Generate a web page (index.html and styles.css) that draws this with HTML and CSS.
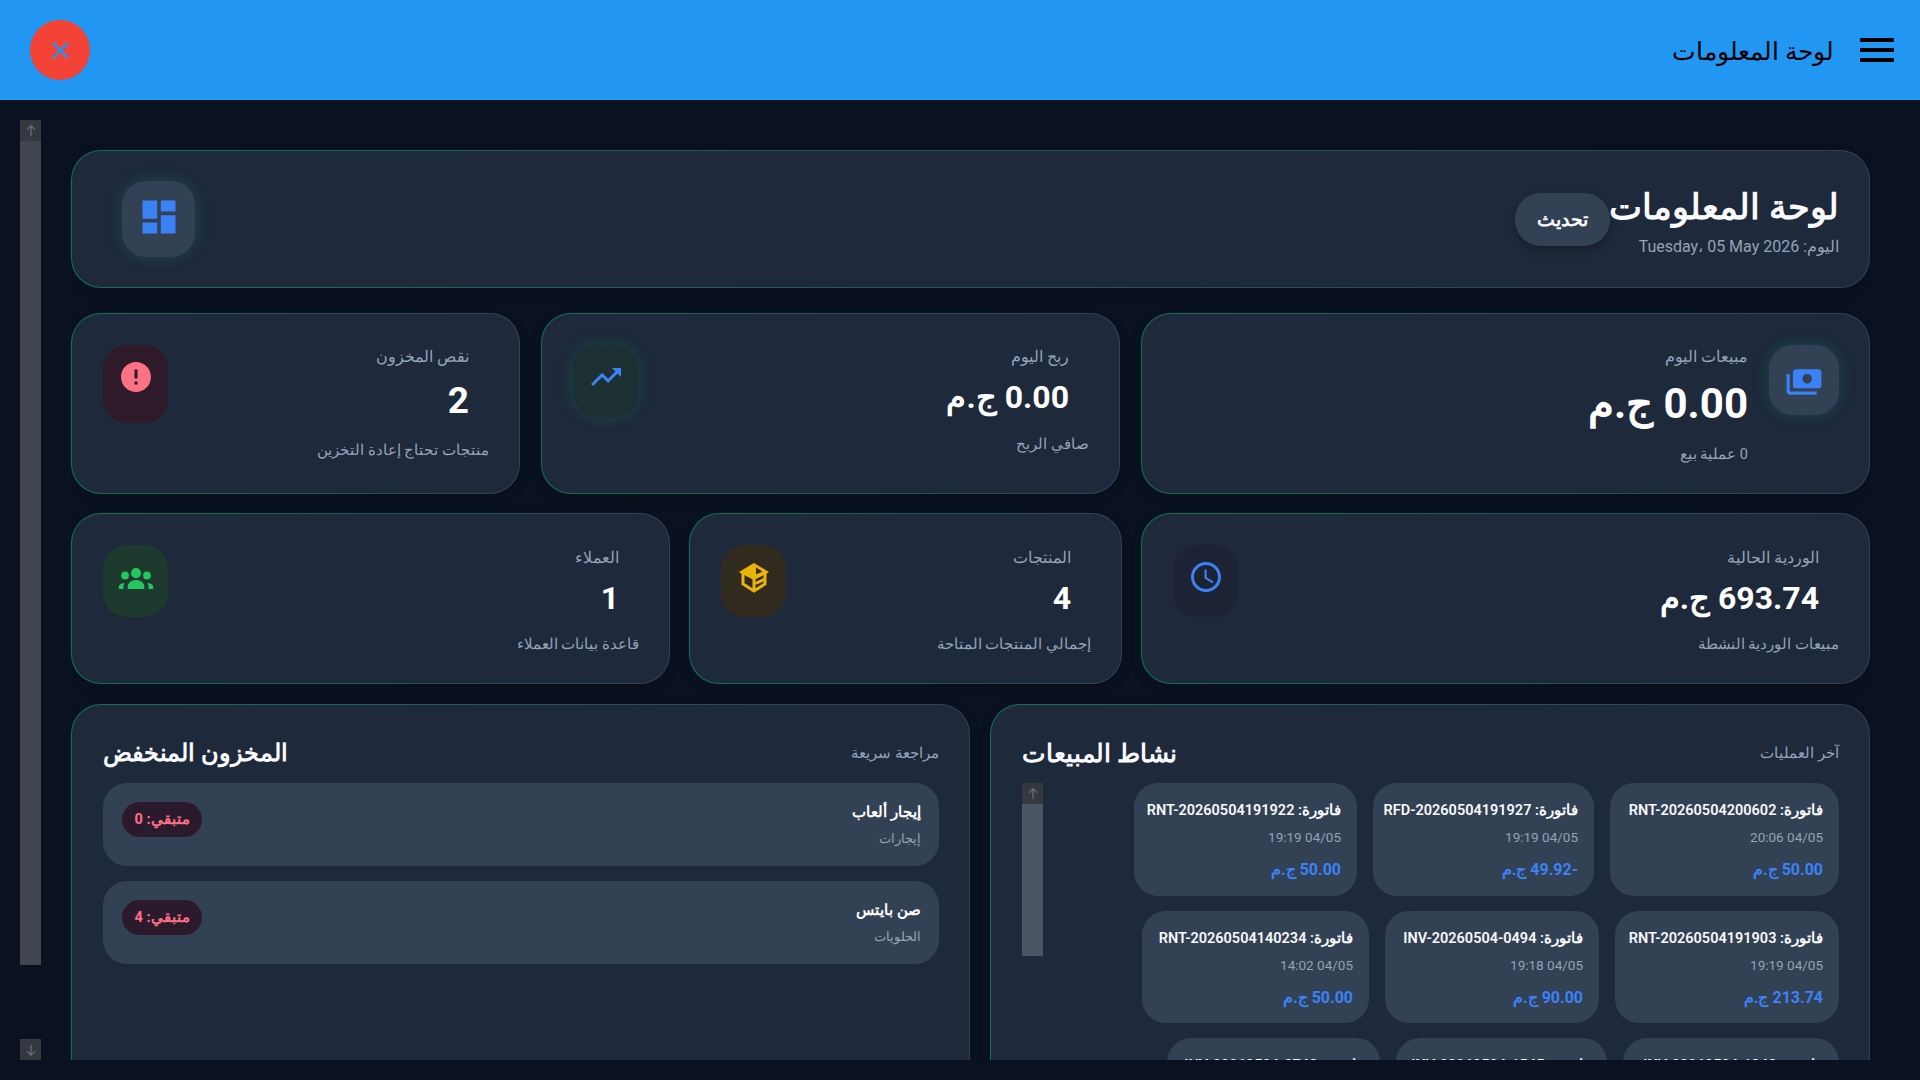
FILE: index.html
```html
<!DOCTYPE html>
<html lang="ar" dir="rtl">
<head>
<meta charset="utf-8">
<title>لوحة المعلومات</title>
<link rel="stylesheet" href="styles.css">
</head>
<body>
<header class="topbar">
  <button class="menu-btn" aria-label="menu"><span></span><span></span><span></span></button>
  <div class="topbar-title">لوحة المعلومات</div>
  <div class="topbar-spacer"></div>
  <button class="close-btn" aria-label="close">
    <svg viewBox="0 0 24 24" width="29" height="29"><path d="M19 6.41 17.59 5 12 10.59 6.41 5 5 6.41 10.59 12 5 17.59 6.41 19 12 13.41 17.59 19 19 17.59 13.41 12z" fill="#2196f3"/></svg>
  </button>
</header>
<div class="viewport">
  <main class="content">
    <section class="card hero">
      <div class="hero-text">
        <h1>لوحة المعلومات</h1>
        <p>اليوم: Tuesday، 05 May 2026</p>
      </div>
      <button class="refresh">تحديث</button>
      <div class="hero-spacer"></div>
      <div class="icon-box hero-icon glow">
        <svg viewBox="0 0 24 24" width="44" height="44"><path d="M3 13h8V3H3zm0 8h8v-6H3zm10 0h8V11h-8zm0-18v6h8V3z" fill="#3b82f6"/></svg>
      </div>
    </section>

    <div class="row row-a">
      <article class="card stat stat-sales">
        <div class="stat-head">
          <div class="icon-box slate glow icon-70">
            <svg viewBox="0 0 24 24" width="38" height="38"><path d="M19 14V6c0-1.100-.9-2-2-2H3c-1.100 0-2 .9-2 2v8c0 1.100.9 2 2 2h14c1.100 0 2-.9 2-2zm-9-1c-1.660 0-3-1.340-3-3s1.340-3 3-3 3 1.340 3 3-1.340 3-3 3zm13-6v11c0 1.100-.9 2-2 2H4v-2h17V7h2z" fill="#3b82f6" transform="translate(24 0) scale(-1 1)"/></svg>
          </div>
          <div class="stat-body">
            <div class="stat-label">مبيعات اليوم</div>
            <div class="stat-value xl">0.00 ج.م</div>
            <div class="stat-sub">0 عملية بيع</div>
          </div>
        </div>
      </article>
      <article class="card stat stat-profit">
        <div class="stat-head">
          <div class="stat-main">
            <div class="stat-label">ربح اليوم</div>
            <div class="stat-value">0.00 ج.م</div>
          </div>
          <div class="icon-box green-dark glow">
            <svg viewBox="0 0 24 24" width="36" height="36"><path d="m16 6 2.290 2.290-4.880 4.880-4-4L2 16.590 3.410 18l6-6 4 4 6.300-6.290L22 12V6z" fill="#3b82f6"/></svg>
          </div>
        </div>
        <div class="stat-sub under">صافي الربح</div>
      </article>
      <article class="card stat stat-low">
        <div class="stat-head">
          <div class="stat-main">
            <div class="stat-label">نقص المخزون</div>
            <div class="stat-value lg">2</div>
          </div>
          <div class="icon-box rose tall">
            <svg viewBox="0 0 24 24" width="36" height="36"><path d="M12 2C6.480 2 2 6.480 2 12s4.480 10 10 10 10-4.480 10-10S17.520 2 12 2zm1 15h-2v-2h2zm0-4h-2V7h2z" fill="#fb7185"/></svg>
          </div>
        </div>
        <div class="stat-sub under">منتجات تحتاج إعادة التخزين</div>
      </article>
    </div>

    <div class="row row-b">
      <article class="card stat stat-shift">
        <div class="stat-head">
          <div class="stat-main">
            <div class="stat-label">الوردية الحالية</div>
            <div class="stat-value">693.74 ج.م</div>
          </div>
          <div class="icon-box navy">
            <svg viewBox="0 0 24 24" width="36" height="36"><path d="M11.990 2C6.470 2 2 6.480 2 12s4.470 10 9.990 10C17.520 22 22 17.520 22 12S17.520 2 11.990 2zM12 20c-4.420 0-8-3.580-8-8s3.580-8 8-8 8 3.580 8 8-3.580 8-8 8zm.5-13H11v6l5.250 3.150.75-1.230-4.500-2.670z" fill="#3b82f6"/></svg>
          </div>
        </div>
        <div class="stat-sub under">مبيعات الوردية النشطة</div>
      </article>
      <article class="card stat stat-products">
        <div class="stat-head">
          <div class="stat-main">
            <div class="stat-label">المنتجات</div>
            <div class="stat-value">4</div>
          </div>
          <div class="icon-box amber">
            <svg viewBox="0 0 30 30" width="30" height="30" class="box-icon">
              <path d="M15 0 0 9l3 2 12 6 12-6 3-2z" fill="#eab308"/>
              <path d="M17 4.500v7l6.500-3z" fill="#312a1e"/>
              <path d="M4 9v12l11 7 11-7V9M15 15v13M16.500 20.500 26 16" fill="none" stroke="#eab308" stroke-width="3"/>
            </svg>
          </div>
        </div>
        <div class="stat-sub under">إجمالي المنتجات المتاحة</div>
      </article>
      <article class="card stat stat-customers">
        <div class="stat-head">
          <div class="stat-main">
            <div class="stat-label">العملاء</div>
            <div class="stat-value">1</div>
          </div>
          <div class="icon-box green">
            <svg viewBox="0 0 24 24" width="36" height="36" fill="#22c55e">
              <circle cx="12" cy="9.400" r="3.400"/>
              <circle cx="4.700" cy="11" r="2.600"/>
              <circle cx="19.300" cy="11" r="2.600"/>
              <path d="M6.500 20v-1.500c0-2.600 2.400-4.500 5.500-4.500s5.500 1.900 5.500 4.500V20z"/>
              <path d="M.5 20v-1c0-1.500 1-2.700 3.800-3-.5 1-.7 2-.7 3v1z"/>
              <path d="M23.500 20v-1c0-1.500-1-2.700-3.800-3 .5 1 .7 2 .7 3v1z"/>
            </svg>
          </div>
        </div>
        <div class="stat-sub under">قاعدة بيانات العملاء</div>
      </article>
    </div>

    <div class="row row-c">
      <section class="card panel panel-sales">
        <div class="panel-head">
          <span class="panel-note">آخر العمليات</span>
          <h2>نشاط المبيعات</h2>
        </div>
        <div class="activity">
          <div class="activity-list">
            <div class="tx"><b>فاتورة: RNT-20260504200602</b><span>04/05 20:06</span><em>50.00 ج.م</em></div>
            <div class="tx"><b>فاتورة: RFD-20260504191927</b><span>04/05 19:19</span><em>-49.92 ج.م</em></div>
            <div class="tx"><b>فاتورة: RNT-20260504191922</b><span>04/05 19:19</span><em>50.00 ج.م</em></div>
            <div class="tx"><b>فاتورة: RNT-20260504191903</b><span>04/05 19:19</span><em>213.74 ج.م</em></div>
            <div class="tx"><b>فاتورة: INV-20260504-0494</b><span>04/05 19:18</span><em>90.00 ج.م</em></div>
            <div class="tx"><b>فاتورة: RNT-20260504140234</b><span>04/05 14:02</span><em>50.00 ج.م</em></div>
            <div class="tx"><b>فاتورة: INV-20260504-1943</b><span>04/05 13:00</span><em>50.00 ج.م</em></div>
            <div class="tx"><b>فاتورة: INV-20260504-1545</b><span>04/05 12:40</span><em>50.00 ج.م</em></div>
            <div class="tx"><b>فاتورة: INV-20260504-0743</b><span>04/05 12:10</span><em>50.00 ج.م</em></div>
          </div>
          <div class="scrollbar inner-bar">
            <div class="sb-btn"><svg viewBox="0 0 12 12" width="14" height="14"><path d="M6 1.500v9M2.500 5 6 1.500 9.500 5" fill="none" stroke="#6b7280" stroke-width="1"/></svg></div>
          </div>
        </div>
      </section>
      <section class="card panel panel-low">
        <div class="panel-head">
          <span class="panel-note">مراجعة سريعة</span>
          <h2>المخزون المنخفض</h2>
        </div>
        <div class="low-list">
          <div class="low-item">
            <div class="low-text"><b>إيجار ألعاب</b><span>إيجارات</span></div>
            <div class="badge">متبقي: 0</div>
          </div>
          <div class="low-item">
            <div class="low-text"><b>صن بايتس</b><span>الحلويات</span></div>
            <div class="badge">متبقي: 4</div>
          </div>
        </div>
      </section>
    </div>
  </main>
  <div class="page-scroll">
    <div class="scrollbar outer-bar">
      <div class="sb-btn"><svg viewBox="0 0 12 12" width="14" height="14"><path d="M6 1.500v9M2.500 5 6 1.500 9.500 5" fill="none" stroke="#6b7280" stroke-width="1"/></svg></div>
    </div>
    <div class="sb-btn sb-down"><svg viewBox="0 0 12 12" width="14" height="14"><path d="M6 1.500v9M2.500 7 6 10.500 9.500 7" fill="none" stroke="#6b7280" stroke-width="1"/></svg></div>
  </div>
</div>
</body>
</html>
```
FILE: styles.css
```css
* { box-sizing: border-box; }
html, body { margin: 0; height: 100%; overflow: hidden; }
body {
  background: #0a1120;
  color: #fff;
  font-family: Roboto, sans-serif;
  height: 1080px;
}
button { font-family: inherit; border: 0; padding: 0; cursor: pointer; }
h1, h2, p { margin: 0; }

.topbar {
  height: 100px;
  background: #2196f3;
  display: flex;
  align-items: center;
  padding: 0 26px 0 30px;
}
.menu-btn {
  width: 34px; height: 24px;
  background: none;
  display: flex; flex-direction: column; justify-content: space-between;
}
.menu-btn span { display: block; height: 4px; background: #000; }
.topbar-title { font-size: 25px; color: #000; margin-right: 26px; line-height: 1; padding-top: 2px; }
.topbar-spacer { flex: 1; }
.close-btn {
  width: 60px; height: 60px; border-radius: 50%;
  background: #f44336;
  display: flex; align-items: center; justify-content: center;
}

.viewport {
  height: 980px;
  padding: 20px;
  display: flex;
}
.content {
  width: 1799px;
  margin-right: 30px;
  padding-top: 30px;
  height: 940px;
  overflow: hidden;
  order: 1;
}
.page-scroll { order: 2; width: 21px; display: flex; flex-direction: column; justify-content: space-between; height: 940px; margin-right: 30px; }

.scrollbar { width: 21px; }
.outer-bar { height: 845px; background: #42454f; }
.sb-btn { width: 21px; height: 21px; background: #36383f; display: flex; align-items: center; justify-content: center; }

.card {
  border: 1px solid transparent;
  border-radius: 30px;
  background:
    linear-gradient(#1e293b, #1e293b) padding-box,
    linear-gradient(90deg, #0c7358 0%, #334155 100%) border-box;
  box-shadow: 0 4px 12px rgba(0,0,0,.15);
}
.hero {
  height: 138px;
  display: flex;
  align-items: center;
  padding: 0 30px 0 50px;
}
.hero-text { display: flex; flex-direction: column; }
.hero h1 { font-size: 35px; font-weight: 600; line-height: 53px; color: #f8fafc; }
.hero p { font-size: 16px; color: #94a3b8; line-height: 22px; margin-top: 2px; }
.refresh {
  width: 95px; height: 53px;
  border-radius: 26px;
  background: #334155;
  color: #f8fafc;
  font-size: 19px;
  font-weight: 600;
  box-shadow: 0 4px 10px rgba(0,0,0,.25);
  margin-right: -1px;
}
.hero-spacer { flex: 1; }
.icon-box {
  width: 65px; height: 72px;
  margin-top: 1px;
  border-radius: 24px;
  padding-top: 14px;
  display: flex; align-items: flex-start; justify-content: center;
  flex: none;
}
.hero-icon { width: 73px; height: 76px; background: #334155; margin-top: 0; }
.glow { box-shadow: 0 0 16px rgba(16,185,129,.22); }
.slate { background: #334155; }
.icon-70 { width: 70px; height: 70px; padding-top: 18px; }
.green-dark { background: #1c2f33; }
.rose { background: #2e1a28; }
.tall { height: 78px; }
.navy { background: #1e2235; }
.amber { background: #312a1e; }
.green { background: #1e3a2f; }
.box-icon { margin-top: 4px; }

.row { display: grid; }
.row-a { grid-template-columns: 729px 579px 449px; grid-template-rows: 181px; column-gap: 21px; margin-top: 25px; }
.row-b { grid-template-columns: 729px 433px 599px; grid-template-rows: 171px; column-gap: 19px; margin-top: 19px; }
.row-c { grid-template-columns: 880px 899px; column-gap: 20px; margin-top: 20px; }

.stat { padding: 30px 30px 0 31px; }
.row-b .stat { padding-top: 31px; }
.row-b .icon-box { margin-top: 0; }
.stat-head { display: flex; align-items: flex-start; justify-content: space-between; }
.stat-sales .stat-head { justify-content: flex-start; gap: 21px; }
.stat-main { padding-right: 20px; }
.stat-label { font-size: 16px; line-height: 26px; color: #94a3b8; }
.stat-value { font-size: 32px; font-weight: 700; line-height: 50px; margin-top: 4px; color: #fff; }
.row-b .stat-value { margin-top: 2px; }
.stat-profit .stat-value { margin-top: 2px; }
.stat-value.xl { font-size: 42px; line-height: 60px; }
.stat-value.lg { font-size: 37px; line-height: 54px; }
.stat-sub { font-size: 14.5px; line-height: 22px; color: #94a3b8; margin-top: 10px; }
.stat-sub.under { margin-top: 11px; }
.stat-profit .stat-sub.under { margin-top: 12px; }
.stat-low .stat-sub.under { margin-top: 12px; }

.panel { padding: 28px 30px 0 31px; height: 500px; }
.panel-head { display: flex; justify-content: space-between; align-items: center; height: 40px; margin-bottom: 10px; }
.panel-head h2 { font-size: 25px; font-weight: 600; color: #f8fafc; }
.panel-low .panel-head h2 { font-size: 24px; }
.panel-note { font-size: 14.5px; color: #94a3b8; }

.activity { display: flex; }
.activity-list { flex: 1; display: flex; flex-wrap: wrap; gap: 15px 16px; align-content: flex-start; }
.inner-bar { height: 173px; background: #4b5563; flex: none; }
.tx {
  background: #334155;
  border-radius: 24px;
  padding: 16px 16px 0;
  height: 112.5px;
  display: flex; flex-direction: column;
}
.tx:nth-child(1) { width: 229px; }
.tx:nth-child(2) { width: 221px; }
.tx:nth-child(3) { width: 223px; }
.tx:nth-child(4) { width: 224px; }
.tx:nth-child(5) { width: 214px; }
.tx:nth-child(6) { width: 227px; }
.tx:nth-child(7) { width: 216px; }
.tx:nth-child(8) { width: 211px; }
.tx:nth-child(9) { width: 213px; }
.tx b { font-size: 14.5px; font-weight: 600; line-height: 24px; color: #f8fafc; white-space: nowrap; }
.tx span { font-size: 13.5px; line-height: 22px; color: #94a3b8; margin-top: 3px; }
.tx em { font-style: normal; font-size: 16px; font-weight: 700; color: #3b82f6; line-height: 24px; margin-top: 10px; }

.low-list { display: flex; flex-direction: column; gap: 15px; }
.low-item {
  height: 83px;
  background: #334155;
  border-radius: 24px;
  padding: 0 18px 0 19px;
  display: flex; align-items: flex-start; justify-content: space-between;
}
.low-text { display: flex; flex-direction: column; padding-top: 17px; }
.low-text b { font-size: 14.5px; font-weight: 600; line-height: 26px; }
.low-text span { font-size: 13.3px; line-height: 24px; color: #94a3b8; margin-top: 1px; }
.badge {
  margin-top: 19px;
  width: 80px; height: 35px;
  border-radius: 18px;
  background: #2b1a2b;
  color: #fb7185;
  font-size: 14.5px; font-weight: 700;
  display: flex; align-items: center; justify-content: center;
}
```
